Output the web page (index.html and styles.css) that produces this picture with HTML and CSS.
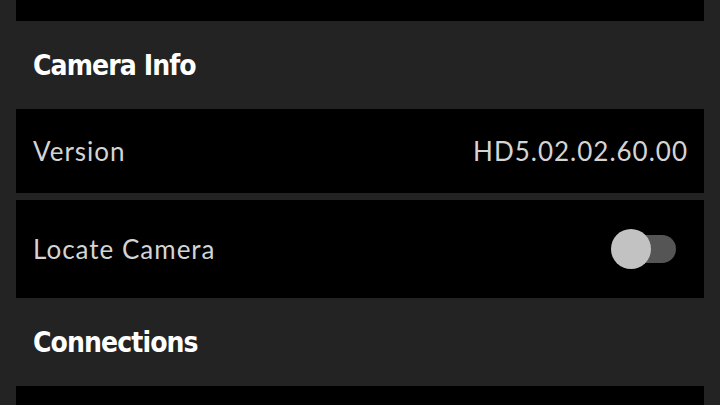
FILE: index.html
```html
<!DOCTYPE html>
<html>
<head>
<meta charset="utf-8">
<link rel="stylesheet" href="styles.css">
</head>
<body>
<div class="page">
  <div class="card card-top"></div>
  <div class="section-head"><h2>Camera Info</h2></div>
  <div class="card row row-version">
    <span class="label">Version</span>
    <span class="value">HD5.02.02.60.00</span>
  </div>
  <div class="card row row-locate">
    <span class="label">Locate Camera</span>
    <span class="toggle"><span class="track"></span><span class="knob"></span></span>
  </div>
  <div class="section-head"><h2>Connections</h2></div>
  <div class="card card-bottom"></div>
</div>
</body>
</html>
```
FILE: styles.css
```css
html, body {
  margin: 0;
  padding: 0;
  background: #232323;
  width: 720px;
  height: 405px;
  overflow: hidden;
}
.page {
  display: flex;
  flex-direction: column;
  padding: 0 16px;
}
.card {
  background: #000;
}
.card-top {
  height: 21px;
}
.section-head {
  height: 88px;
  display: flex;
  align-items: center;
  padding-left: 17px;
}
.section-head h2 {
  margin: 0;
  font-family: "DejaVu Sans Condensed", "DejaVu Sans", sans-serif;
  font-weight: bold;
  font-size: 28px;
  color: #fff;
  letter-spacing: -0.9px;
}
.row {
  display: flex;
  align-items: center;
  justify-content: space-between;
  padding: 0 17px;
  font-family: Lato, "Open Sans", sans-serif;
  font-size: 26px;
  letter-spacing: 1px;
  color: #d4d4d4;
}
.row .value {
  margin-right: -1px;
}
.row-version {
  height: 84px;
  margin-bottom: 7px;
}
.row-locate {
  height: 98px;
}
.toggle {
  position: relative;
  width: 65px;
  height: 40px;
  margin-right: 11px;
}
.track {
  position: absolute;
  left: 9px;
  top: 6px;
  width: 56px;
  height: 28px;
  border-radius: 14px;
  background: #555;
}
.knob {
  position: absolute;
  left: 0;
  top: 0;
  width: 40px;
  height: 40px;
  border-radius: 50%;
  background: #c2c2c2;
}
.card-bottom {
  height: 30px;
}
```
